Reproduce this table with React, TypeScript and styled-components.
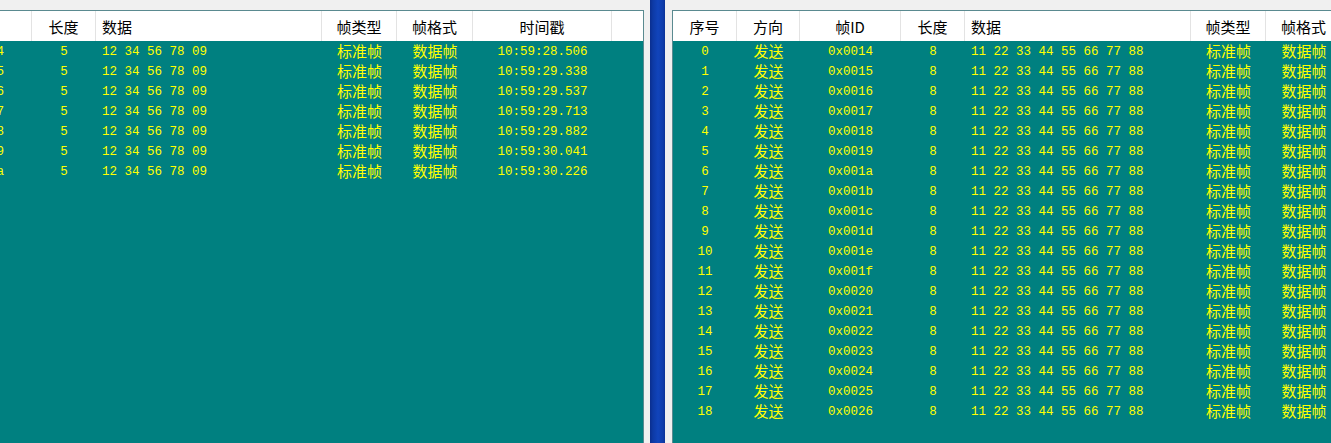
import React from "react";
import styled, { createGlobalStyle } from "styled-components";

const GlobalStyle = createGlobalStyle`
  html, body { margin: 0; padding: 0; background: #f0f0f0; overflow: hidden; }
  #root { width: 1331px; height: 443px; }
`;

type Align = "left" | "center";
type Kind = "num" | "cjk";
interface Column { key: string; title: string; width: number; align: Align; kind: Kind; }

const columns: Column[] = [
  { key: "idx", title: "序号", width: 64, align: "center", kind: "num" },
  { key: "dir", title: "方向", width: 63, align: "center", kind: "cjk" },
  { key: "id", title: "帧ID", width: 101, align: "center", kind: "num" },
  { key: "len", title: "长度", width: 64, align: "center", kind: "num" },
  { key: "data", title: "数据", width: 226, align: "left", kind: "num" },
  { key: "type", title: "帧类型", width: 75, align: "center", kind: "cjk" },
  { key: "fmt", title: "帧格式", width: 76, align: "center", kind: "cjk" },
  { key: "time", title: "时间戳", width: 139, align: "center", kind: "num" },
];

type Row = Record<string, string>;

const hex = (n: number) => "0x" + n.toString(16).padStart(4, "0");

const leftTimes = ["10:59:28.506", "10:59:29.338", "10:59:29.537", "10:59:29.713", "10:59:29.882", "10:59:30.041", "10:59:30.226"];
const leftRows: Row[] = leftTimes.map((t, i) => ({
  idx: String(i),
  dir: "接收",
  id: hex(0x14 + i),
  len: "5",
  data: "12 34 56 78 09",
  type: "标准帧",
  fmt: "数据帧",
  time: t,
}));

const rightRows: Row[] = Array.from({ length: 19 }, (_, i) => ({
  idx: String(i),
  dir: "发送",
  id: hex(0x14 + i),
  len: "8",
  data: "11 22 33 44 55 66 77 88",
  type: "标准帧",
  fmt: "数据帧",
  time: "",
}));

const Page = styled.div`
  display: flex;
  width: 1331px;
  height: 443px;
  overflow: hidden;
  background: #f0f0f0;
`;

const LeftPane = styled.div`
  flex: none;
  width: 650px;
  box-sizing: border-box;
  padding: 10px 6px 0 0;
  display: flex;
  justify-content: flex-end;
  overflow: hidden;
  background: #f0f0f0;
`;

const Divider = styled.div`
  flex: none;
  width: 15px;
  background: linear-gradient(to right, #0a2e8e 0, #0d3aa6 3px, #1144bb 8px, #0e3cab 13px, #0b3296 15px);
`;

const RightPane = styled.div`
  flex: 1;
  min-width: 0;
  box-sizing: border-box;
  padding: 10px 0 0 7px;
  display: flex;
  overflow: hidden;
  background: #f0f0f0;
`;

const ListView = styled.div<{ $filler: number }>`
  flex: none;
  display: flex;
  flex-direction: column;
  border: 1px solid #5a8a90;
  border-bottom: none;
  background: #008080;
  height: 460px;
  width: ${(p) => 808 + p.$filler}px;
`;

const gridTemplate = (filler: number) =>
  columns.map((c) => `${c.width}px`).join(" ") + (filler > 0 ? ` ${filler}px` : "");

const HeaderRow = styled.div<{ $template: string }>`
  display: grid;
  grid-template-columns: ${(p) => p.$template};
  height: 30px;
  background: #ffffff;
`;

const HeaderCell = styled.div<{ $align: Align }>`
  box-sizing: border-box;
  display: flex;
  align-items: center;
  justify-content: ${(p) => (p.$align === "left" ? "flex-start" : "center")};
  padding: 0 ${(p) => (p.$align === "left" ? "6px" : "0")};
  border-right: 1px solid #e3e3e3;
  font-family: "Noto Sans CJK SC", "Liberation Sans", sans-serif;
  font-size: 15px;
  color: #000;
  white-space: nowrap;
  overflow: hidden;
`;

const FillerCell = styled.div`
  background: #ffffff;
`;

const BodyRow = styled.div<{ $template: string }>`
  display: grid;
  grid-template-columns: ${(p) => p.$template};
  height: 20px;
`;

const Cell = styled.div<{ $align: Align; $kind: Kind }>`
  box-sizing: border-box;
  height: 20px;
  display: flex;
  align-items: center;
  justify-content: ${(p) => (p.$align === "left" ? "flex-start" : "center")};
  padding: ${(p) => (p.$kind === "num" ? "2px" : "0")} ${(p) => (p.$align === "left" ? "6px" : "0")} 0;
  color: #ffff00;
  white-space: pre;
  overflow: hidden;
  font-family: ${(p) =>
    p.$kind === "num"
      ? `"Liberation Mono", "Noto Sans CJK SC", monospace`
      : `"Noto Sans CJK SC", "Liberation Sans", sans-serif`};
  font-size: ${(p) => (p.$kind === "num" ? "12.5px" : "15px")};
  line-height: 20px;
`;

function FrameList({ rows, filler }: { rows: Row[]; filler: number }) {
  const template = gridTemplate(filler);
  return (
    <ListView $filler={filler}>
      <HeaderRow $template={template}>
        {columns.map((c) => (
          <HeaderCell key={c.key} $align={c.align}>
            {c.title}
          </HeaderCell>
        ))}
        {filler > 0 && <FillerCell />}
      </HeaderRow>
      {rows.map((r, i) => (
        <BodyRow key={i} $template={template}>
          {columns.map((c) => (
            <Cell key={c.key} $align={c.align} $kind={c.kind}>
              {r[c.key]}
            </Cell>
          ))}
          {filler > 0 && <div />}
        </BodyRow>
      ))}
    </ListView>
  );
}

export default function App() {
  return (
    <>
      <GlobalStyle />
      <Page>
        <LeftPane>
          <FrameList rows={leftRows} filler={31} />
        </LeftPane>
        <Divider />
        <RightPane>
          <FrameList rows={rightRows} filler={0} />
        </RightPane>
      </Page>
    </>
  );
}
